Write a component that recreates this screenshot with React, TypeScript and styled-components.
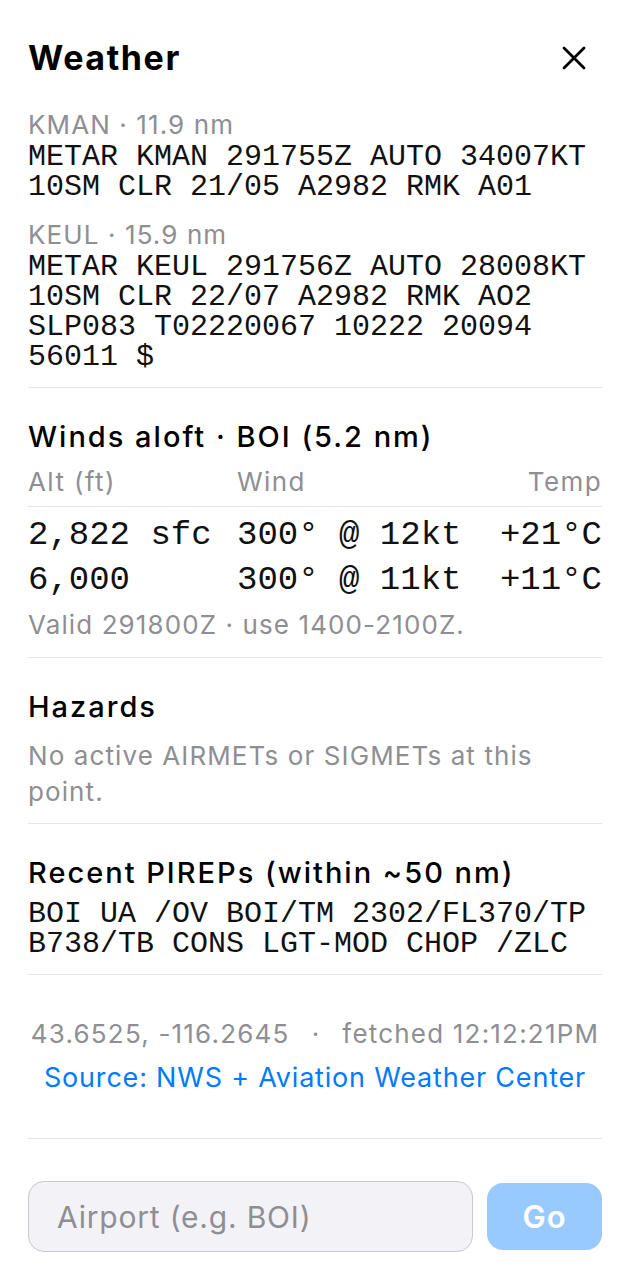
import React from "react";
import styled, { createGlobalStyle } from "styled-components";

const Global = createGlobalStyle`
  html, body { margin: 0; padding: 0; background: #ffffff; }
  body { font-family: Inter, "Noto Sans", sans-serif; color: #000; -webkit-font-smoothing: antialiased; }
  * { box-sizing: border-box; }
`;

const Page = styled.div`
  padding: 38px 26px 0 28px;
  display: flex;
  flex-direction: column;
`;

const Header = styled.header`
  display: flex;
  align-items: center;
  justify-content: space-between;
  height: 40px;
  margin-bottom: 31px;
`;

const Title = styled.h1`
  margin: 0;
  font-size: 34px;
  line-height: 40px;
  font-weight: 700;
  letter-spacing: 1.6px;
`;

const CloseButton = styled.button`
  border: 0;
  background: none;
  padding: 0;
  width: 28px;
  height: 28px;
  display: flex;
  align-items: center;
  justify-content: center;
  margin-right: 14px;
  cursor: pointer;
`;

const Section = styled.section<{ $top: number; $bottom: number }>`
  padding-top: ${(p) => p.$top}px;
  padding-bottom: ${(p) => p.$bottom}px;
  border-bottom: 1px solid #e5e5ea;
  display: flex;
  flex-direction: column;
`;

const Station = styled.div`
  display: flex;
  flex-direction: column;
  & + & { margin-top: 17px; }
`;

const Caption = styled.div<{ $mt?: number }>`
  font-size: 26px;
  line-height: 32px;
  color: #8e8e93;
  margin-top: ${(p) => p.$mt ?? 0}px;
  letter-spacing: 1.1px;
`;

const Mono = styled.div<{ $mt?: number }>`
  font-family: "Liberation Mono", "Courier New", monospace;
  font-size: 30px;
  line-height: 30px;
  color: #111;
  margin-top: ${(p) => p.$mt ?? 0}px;
  white-space: pre-wrap;
`;

const Heading = styled.h2`
  margin: 0;
  font-size: 29px;
  line-height: 36px;
  font-weight: 500;
  letter-spacing: 2px;
`;

const Table = styled.div`
  display: grid;
  grid-template-columns: 209px 1fr auto;
  margin-top: 11px;
`;

const HeadCell = styled.div<{ $right?: boolean }>`
  font-size: 26px;
  line-height: 32px;
  color: #8e8e93;
  padding-bottom: 8px;
  border-bottom: 1px solid #e5e5ea;
  text-align: ${(p) => (p.$right ? "right" : "left")};
  margin-bottom: 6px;
  letter-spacing: 1.4px;
`;

const Cell = styled.div<{ $right?: boolean }>`
  font-family: "Liberation Mono", "Courier New", monospace;
  font-size: 34px;
  line-height: 45px;
  color: #111;
  white-space: pre;
  text-align: ${(p) => (p.$right ? "right" : "left")};
`;

const Body = styled.p`
  margin: 13px 0 0;
  font-size: 26px;
  line-height: 36px;
  color: #8e8e93;
  letter-spacing: 1.1px;
`;

const Footer = styled.div`
  padding: 43px 0 44px;
  border-bottom: 1px solid #e5e5ea;
  display: flex;
  flex-direction: column;
  align-items: center;
  gap: 12px;
`;

const Meta = styled.div`
  display: flex;
  gap: 22px;
  font-size: 26px;
  line-height: 32px;
  color: #8e8e93;
  letter-spacing: 1.2px;
  white-space: nowrap;
`;

const SourceLink = styled.a`
  font-size: 27px;
  line-height: 32px;
  color: #007aff;
  text-decoration: none;
  letter-spacing: 0.8px;
`;

const Form = styled.form`
  display: flex;
  align-items: center;
  gap: 14px;
  padding-top: 42px;
`;

const Input = styled.input`
  flex: 1;
  min-width: 0;
  height: 71px;
  border-radius: 16px;
  border: 1.5px solid #c9c9ce;
  background: #f2f2f7;
  padding: 0 28px;
  font-family: Inter, sans-serif;
  font-size: 30px;
  letter-spacing: 0.8px;
  color: #000;
  outline: none;
  &::placeholder { color: #8e8e93; }
`;

const GoButton = styled.button`
  width: 115px;
  height: 67px;
  border: 0;
  border-radius: 16px;
  background: #99caff;
  color: #fff;
  font-family: Inter, sans-serif;
  font-size: 31px;
  font-weight: 600;
  letter-spacing: 1px;
  cursor: default;
`;

export default function App() {
  return (
    <>
      <Global />
      <Page>
        <Header>
          <Title>Weather</Title>
          <CloseButton aria-label="Close">
            <svg width="24" height="24" viewBox="0 0 24 24">
              <path d="M2 2 L22 22 M22 2 L2 22" stroke="#000" strokeWidth="2.8" strokeLinecap="round" />
            </svg>
          </CloseButton>
        </Header>

        <Section $top={0} $bottom={15}>
          <Station>
            <Caption>KMAN · 11.9 nm</Caption>
            <Mono $mt={1}>{"METAR KMAN 291755Z AUTO 34007KT\n10SM CLR 21/05 A2982 RMK A01"}</Mono>
          </Station>
          <Station>
            <Caption>KEUL · 15.9 nm</Caption>
            <Mono $mt={1}>
              {"METAR KEUL 291756Z AUTO 28008KT\n10SM CLR 22/07 A2982 RMK AO2\nSLP083 T02220067 10222 20094\n56011 $"}
            </Mono>
          </Station>
        </Section>

        <Section $top={31} $bottom={16}>
          <Heading>Winds aloft · BOI (5.2 nm)</Heading>
          <Table>
            <HeadCell>Alt (ft)</HeadCell>
            <HeadCell>Wind</HeadCell>
            <HeadCell $right>Temp</HeadCell>
            <Cell>2,822 sfc</Cell>
            <Cell>300° @ 12kt</Cell>
            <Cell $right>+21°C</Cell>
            <Cell>6,000</Cell>
            <Cell>300° @ 11kt</Cell>
            <Cell $right>+11°C</Cell>
          </Table>
          <Caption $mt={6}>Valid 291800Z · use 1400-2100Z.</Caption>
        </Section>

        <Section $top={31} $bottom={13}>
          <Heading>Hazards</Heading>
          <Body>No active AIRMETs or SIGMETs at this point.</Body>
        </Section>

        <Section $top={31} $bottom={15}>
          <Heading>Recent PIREPs (within ~50 nm)</Heading>
          <Mono $mt={8}>{"BOI UA /OV BOI/TM 2302/FL370/TP\nB738/TB CONS LGT-MOD CHOP /ZLC"}</Mono>
        </Section>

        <Footer>
          <Meta>
            <span>43.6525, -116.2645</span>
            <span>·</span>
            <span>fetched 12:12:21PM</span>
          </Meta>
          <SourceLink href="#">Source: NWS + Aviation Weather Center</SourceLink>
        </Footer>

        <Form onSubmit={(e) => e.preventDefault()}>
          <Input placeholder="Airport (e.g. BOI)" />
          <GoButton type="submit">Go</GoButton>
        </Form>
      </Page>
    </>
  );
}
